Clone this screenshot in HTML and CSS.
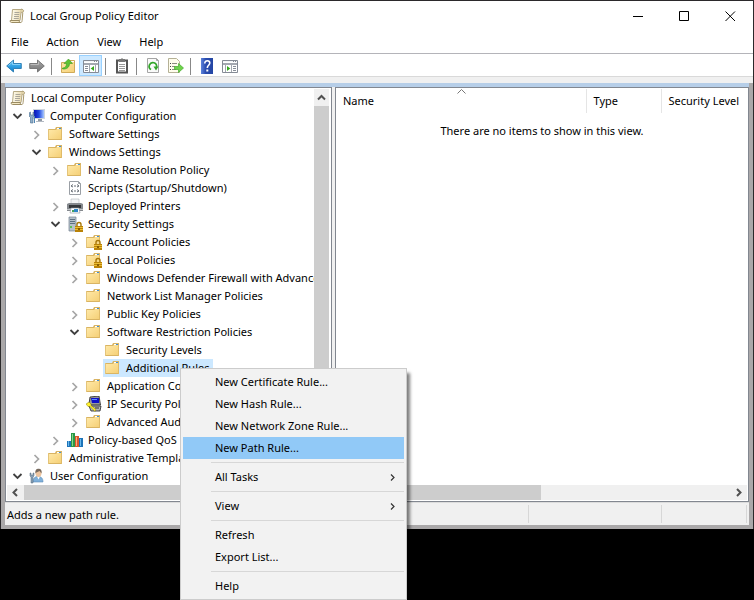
FILE: index.html
```html
<!DOCTYPE html>
<html lang="en">
<head>
<meta charset="utf-8">
<title>Local Group Policy Editor</title>
<link rel="stylesheet" href="styles.css">
</head>
<body>
<svg class="defs" aria-hidden="true">
  <defs>
    <linearGradient id="g-folder" x1="0" y1="0" x2="1" y2="1"><stop offset="0" stop-color="#ffe9a8"/><stop offset="1" stop-color="#f5d077"/></linearGradient>
    <linearGradient id="g-blue" x1="0" y1="0" x2="0" y2="1"><stop offset="0" stop-color="#5cc3f5"/><stop offset="1" stop-color="#0a7fd0"/></linearGradient>
    <linearGradient id="g-gray" x1="0" y1="0" x2="0" y2="1"><stop offset="0" stop-color="#aaa"/><stop offset="1" stop-color="#747474"/></linearGradient>
    <linearGradient id="g-paper" x1="0" y1="0" x2="1" y2="0"><stop offset="0" stop-color="#fffdf0"/><stop offset="1" stop-color="#ead9ac"/></linearGradient>
    <linearGradient id="g-screen" x1="0" y1="0" x2="1" y2="0"><stop offset="0" stop-color="#0712b8"/><stop offset=".5" stop-color="#2148e0"/><stop offset="1" stop-color="#a8c8ff"/></linearGradient>
    <linearGradient id="g-help" x1="0" y1="0" x2="1" y2="0"><stop offset="0" stop-color="#5d83dc"/><stop offset=".4" stop-color="#2a4cae"/><stop offset="1" stop-color="#2446a4"/></linearGradient>
    <symbol id="scroll" viewBox="0 0 16 16">
      <path d="M3.500 1.500h9L11 12.500H2.500z" fill="url(#g-paper)" stroke="#b5a882"/>
      <path d="M12 1.200c1.600 0 2.500.6 2.500 1.600S13.800 4.500 12.500 4.500" fill="#e8d9ae" stroke="#a8996f"/>
      <path d="M1.200 12.500h9c0 1.300.5 2 1.500 2H2.500c-1 0-1.500-.8-1.300-2z" fill="#f4e8c4" stroke="#9a8b62"/>
      <path d="M11.700 14.500c1 0 1.300-.7 1.400-2l.7-8" fill="none" stroke="#a8996f"/>
      <path d="M5.500 4.500h5M5.300 6.500h5M5 8.500h5M4.800 10.500h5" stroke="#aaa69a"/>
    </symbol>
    <symbol id="folder" viewBox="0 0 16 16">
      <path d="M0 3h7l1-2h6v13H0z" fill="#d9b463"/>
      <path d="M9 2h4v1H9z" fill="#fff"/><path d="M11 2h2v1h-2z" fill="#3f8fd8"/>
      <path d="M1 4h7l1-1h4v10H1z" fill="url(#g-folder)"/>
      <path d="M0 3h1v11H0z" fill="#e4c47a"/><path d="M13 3h1v11h-1z" fill="#e0bb69"/>
    </symbol>
    <symbol id="lock" viewBox="0 0 16 16">
      <path d="M10 10V8.500a2 2 0 0 1 4 0V10" fill="none" stroke="#a87708" stroke-width="1.400"/>
      <path d="M8 10h8v6H8z" fill="#b98208"/><path d="M8 11h8v1H8zM8 13h8v1H8z" fill="#ecbe35"/><path d="M11 12h2v2h-2z" fill="#8a5d00"/>
    </symbol>
    <symbol id="folder-lock" viewBox="0 0 16 16"><use href="#folder"/><use href="#lock"/></symbol>
    <symbol id="computer" viewBox="0 0 16 16">
      <path d="M4 1h12v10H4z" fill="#cfd5dc"/><path d="M5 2h10v8H5z" fill="url(#g-screen)"/>
      <path d="M9 11h4v2H9z" fill="#8f98a3"/><path d="M7 13h8v1H7z" fill="#b3bac3"/>
      <path d="M0 5v3l1.500 1.500V15h2.500V9.500L5 8V5l-1-1v3H1.500V4z" fill="#8fb0cc" stroke="#4b6c8b" stroke-width=".6"/>
      <path d="M5 8h1v7H5z" fill="#4f86b5"/>
    </symbol>
    <symbol id="script" viewBox="0 0 16 16">
      <path d="M2.500 1.500h9l2 2v11h-11z" fill="#fff" stroke="#9a9fa5"/><path d="M11.500 1.500v2h2" fill="none" stroke="#9a9fa5"/>
      <path d="M6 4.500l-2 1.500 2 1M10 4.500l2 1.500-2 1M7 6h2M6 9.500L4 11l2 1M10 9.500l2 1.500-2 1M7 11h2" fill="none" stroke="#555c64" stroke-width=".9"/>
    </symbol>
    <symbol id="printer" viewBox="0 0 16 16">
      <path d="M4 1h8v5H4z" fill="#f2f4f5" stroke="#b4b9bd" stroke-width=".6"/>
      <path d="M0 6l2-1h12l2 1v7H0z" fill="#85898e"/><path d="M2 7h12v3H2z" fill="#34373a"/><path d="M0 11h16v1H0z" fill="#c2c6c9"/>
      <path d="M4 10h8l1 5H3z" fill="#fff" stroke="#88909a" stroke-width=".6"/><path d="M5 12h3v2H5z" fill="#49a35d"/><path d="M7 11h4v3H7z" fill="#2d86c7"/>
    </symbol>
    <symbol id="server-lock" viewBox="0 0 16 16">
      <path d="M2 1h7v14H2z" fill="#b6c1cb" stroke="#74828f" stroke-width=".7"/><path d="M3 3.500h5M3 5.500h5M3 7.500h5" stroke="#5d7082"/><path d="M3 10h2v2H3z" fill="#5cc155"/>
      <use href="#lock"/>
    </symbol>
    <symbol id="ipsec" viewBox="0 0 16 16">
      <path d="M4 1l9-1 1.500 9H5L3 8z" fill="#9a9a9a" stroke="#222" stroke-width=".8"/><path d="M5 2h8v5H6z" fill="#1010c8"/><path d="M6 3h5v1H6z" fill="#5a8cff"/>
      <path d="M3 10h12l-1 5H5z" fill="#b8b8b8" stroke="#222" stroke-width=".8"/><path d="M9 12h4" stroke="#333"/>
      <path d="M0 8l3-2 2 2v1.500l5 4-1 2-5-5H2z" fill="#fff02a" stroke="#6b6200" stroke-width=".4"/>
    </symbol>
    <symbol id="bars" viewBox="0 0 16 16">
      <path d="M0 9h4v6H0z" fill="#1d74b9"/><path d="M1 9h1v5H1z" fill="#6ab9ed"/>
      <path d="M4 1h4v14H4z" fill="#2b9848"/><path d="M5 2h1v12H5z" fill="#85d68d"/>
      <path d="M8 4h4v11H8z" fill="#d9582c"/><path d="M9 5h1v9H9z" fill="#ffab83"/>
      <path d="M12 6h4v9h-4z" fill="#1d74b9"/><path d="M13 7h1v7h-1z" fill="#6ab9ed"/>
    </symbol>
    <symbol id="user" viewBox="0 0 16 16">
      <path d="M4 14c0-4 2-5.500 5-5.500s5 1.500 5 5.500z" fill="#7fb0da" stroke="#5a8bb5" stroke-width=".6"/><path d="M8 8.500l1.500 3 1.500-3z" fill="#fff"/>
      <path d="M6.500 5C6.500 2 7.500 1 9.500 1s3 1.200 3 4-1.200 4-3 4-3-1.500-3-4z" fill="#edc49e"/>
      <path d="M6.500 5.500C6 2 7.500.8 9.500.8s3.700 1.400 3 4.700c-1-1-1.200-2-2-2.500-1 1-3 1-4 2.500z" fill="#776a5e"/>
      <path d="M1 5v3l1 1v6h2V9l1-1V5H4v2H2V5z" fill="#8aa1b5" stroke="#50687c" stroke-width=".5"/>
    </symbol>
    <symbol id="back" viewBox="0 0 16 16"><path d="M.7 8l6.800-6v3.500h7.800v5H7.500V14z" fill="url(#g-blue)" stroke="#2879b0" stroke-width=".9"/><path d="M2.500 7.500l4-3.500v2.500h7.800" fill="none" stroke="#a4e0ff" stroke-width=".7"/></symbol>
    <symbol id="forward" viewBox="0 0 16 16"><path d="M15.300 8L8.500 2v3.500H.7v5h7.800V14z" fill="url(#g-gray)" stroke="#707070" stroke-width=".9"/><path d="M1.500 6.500h8V4" fill="none" stroke="#ccc" stroke-width=".7"/></symbol>
    <symbol id="up" viewBox="0 0 16 16"><path d="M1.500 4.500h7l1-2h5v12h-13z" fill="url(#g-folder)" stroke="#d0aa58"/><path d="M10 3.500h4" stroke="#fff"/><path d="M2.500 10c2.500 0 4-1.500 4-4.500H4L8.500 1l4 4.500h-3c0 4-3 6-7 5.500z" fill="#5ec232" stroke="#3c9a22" stroke-width=".6"/></symbol>
    <symbol id="tree-pane" viewBox="0 0 16 16"><path d="M.5 2.500h15v12H.5z" fill="#fff" stroke="#858b95"/><path d="M1 3h14v1H1z" fill="#f4f6f8"/><path d="M11 3h1v1h-1zM13 3h1v1h-1z" fill="#858b95"/><path d="M1 5.500h14M6.500 7v7M12.500 7v7M1 6.500h14" stroke="#a3a8b0"/><path d="M2 8.500h3M2 10.500h3M2 12.500h3" stroke="#888e98"/><path d="M11 8v5l-3.300-2.500z" fill="#35a81c"/></symbol>
    <symbol id="action-pane" viewBox="0 0 16 16"><path d="M.5 2.500h15v12H.5z" fill="#fff" stroke="#858b95"/><path d="M1 3h14v1H1z" fill="#f4f6f8"/><path d="M11 3h1v1h-1zM13 3h1v1h-1z" fill="#858b95"/><path d="M1 5.500h14M9.500 7v7M3.500 7v7M1 6.500h14" stroke="#a3a8b0"/><path d="M11 8.500h3M11 10.500h3M11 12.500h3" stroke="#888e98"/><path d="M5 8v5l3.300-2.500z" fill="#35a81c"/></symbol>
    <symbol id="clipboard" viewBox="0 0 16 16"><path d="M3 2.500h10v12H3z" fill="#fff" stroke="#555" stroke-width="2"/><path d="M5 1h2l1-1 1 1h2v3H5z" fill="#777"/><path d="M5 6.500h6M5 8.500h6M5 10.500h6M5 12.500h6" stroke="#9a9a9a"/></symbol>
    <symbol id="refresh" viewBox="0 0 16 16"><path d="M2.500.5h9l2 2v12h-11z" fill="#fafafa" stroke="#a5a5a5"/><path d="M11.500.5v2h2" fill="none" stroke="#a5a5a5"/><path d="M6 11.500A3.700 3.700 0 1 1 11.500 9" fill="none" stroke="#33a52a" stroke-width="1.700"/><path d="M8.500 8.500h5L11 12.500z" fill="#33a52a"/></symbol>
    <symbol id="export" viewBox="0 0 16 16"><path d="M.5.500h8l3 3v11H.5z" fill="#fffdec" stroke="#b5b196"/><path d="M2 5.500h1M2 8.500h1M2 11.500h1" stroke="#444"/><path d="M4 5.500h5M4 8.500h3M4 11.500h4" stroke="#8d8b80"/><path d="M6.500 8.500h4V5.500l5 4.500-5 4.500v-3h-4z" fill="#6ed34b" stroke="#44aa2a" stroke-width=".7"/></symbol>
    <symbol id="help" viewBox="0 0 16 16"><path d="M2 0h12v16H2z" fill="url(#g-help)"/><path d="M5.800 5.500C5.800 3.500 7 2.800 8.300 2.800s2.500.8 2.500 2.300C10.800 7.200 8.300 7.500 8.300 10" fill="none" stroke="#fff" stroke-width="1.600"/><path d="M7.300 11.500h2v2h-2z" fill="#fff"/></symbol>
    <symbol id="chev-right" viewBox="0 0 16 16"><path d="M5.500 5l4 4-4 4" fill="none" stroke="#a6a6a6" stroke-width="1.700"/></symbol>
    <symbol id="chev-down" viewBox="0 0 16 16"><path d="M3.500 6l4 4 4-4" fill="none" stroke="#404040" stroke-width="1.800"/></symbol>
  </defs>
</svg>

<main class="window">
  <header class="titlebar">
    <svg class="icon"><use href="#scroll"/></svg>
    <h1 class="title">Local Group Policy Editor</h1>
    <button class="caption" aria-label="Minimize"><svg viewBox="0 0 11 11"><path d="M0 5.500h10"/></svg></button>
    <button class="caption" aria-label="Maximize"><svg viewBox="0 0 11 11"><path d="M.5.5h9v9h-9z"/></svg></button>
    <button class="caption" aria-label="Close"><svg viewBox="0 0 11 11"><path d="M.5.5l9.500 9.500M10 .5L.5 10"/></svg></button>
  </header>
  <nav class="menubar">
    <button>File</button><button>Action</button><button>View</button><button>Help</button>
  </nav>
  <div class="toolbar">
    <button aria-label="Back"><svg class="icon"><use href="#back"/></svg></button>
    <button aria-label="Forward"><svg class="icon"><use href="#forward"/></svg></button>
    <span class="divider"></span>
    <button aria-label="Up one level"><svg class="icon"><use href="#up"/></svg></button>
    <button class="active" aria-label="Show or hide console tree"><svg class="icon"><use href="#tree-pane"/></svg></button>
    <span class="divider"></span>
    <button aria-label="Paste"><svg class="icon"><use href="#clipboard"/></svg></button>
    <span class="divider"></span>
    <button aria-label="Refresh"><svg class="icon"><use href="#refresh"/></svg></button>
    <button aria-label="Export list"><svg class="icon"><use href="#export"/></svg></button>
    <span class="divider"></span>
    <button aria-label="Help"><svg class="icon"><use href="#help"/></svg></button>
    <button aria-label="Show or hide action pane"><svg class="icon"><use href="#action-pane"/></svg></button>
  </div>

  <div class="frame">
    <div class="panes">
      <section class="pane tree-pane">
        <div class="tree-area">
          <div class="tree">
            <div class="row"><svg class="icon"><use href="#scroll"/></svg><span class="label">Local Computer Policy</span></div>
            <ul>
              <li>
                <div class="row"><svg class="expander"><use href="#chev-down"/></svg><svg class="icon"><use href="#computer"/></svg><span class="label">Computer Configuration</span></div>
                <ul>
                  <li><div class="row"><svg class="expander"><use href="#chev-right"/></svg><svg class="icon"><use href="#folder"/></svg><span class="label">Software Settings</span></div></li>
                  <li>
                    <div class="row"><svg class="expander"><use href="#chev-down"/></svg><svg class="icon"><use href="#folder"/></svg><span class="label">Windows Settings</span></div>
                    <ul>
                      <li><div class="row"><svg class="expander"><use href="#chev-right"/></svg><svg class="icon"><use href="#folder"/></svg><span class="label">Name Resolution Policy</span></div></li>
                      <li><div class="row leaf"><svg class="icon"><use href="#script"/></svg><span class="label">Scripts (Startup/Shutdown)</span></div></li>
                      <li><div class="row"><svg class="expander"><use href="#chev-right"/></svg><svg class="icon"><use href="#printer"/></svg><span class="label">Deployed Printers</span></div></li>
                      <li>
                        <div class="row"><svg class="expander"><use href="#chev-down"/></svg><svg class="icon"><use href="#server-lock"/></svg><span class="label">Security Settings</span></div>
                        <ul>
                          <li><div class="row"><svg class="expander"><use href="#chev-right"/></svg><svg class="icon"><use href="#folder-lock"/></svg><span class="label">Account Policies</span></div></li>
                          <li><div class="row"><svg class="expander"><use href="#chev-right"/></svg><svg class="icon"><use href="#folder-lock"/></svg><span class="label">Local Policies</span></div></li>
                          <li><div class="row"><svg class="expander"><use href="#chev-right"/></svg><svg class="icon"><use href="#folder"/></svg><span class="label">Windows Defender Firewall with Advanced Security</span></div></li>
                          <li><div class="row leaf"><svg class="icon"><use href="#folder"/></svg><span class="label">Network List Manager Policies</span></div></li>
                          <li><div class="row"><svg class="expander"><use href="#chev-right"/></svg><svg class="icon"><use href="#folder"/></svg><span class="label">Public Key Policies</span></div></li>
                          <li>
                            <div class="row"><svg class="expander"><use href="#chev-down"/></svg><svg class="icon"><use href="#folder"/></svg><span class="label">Software Restriction Policies</span></div>
                            <ul>
                              <li><div class="row leaf"><svg class="icon"><use href="#folder"/></svg><span class="label">Security Levels</span></div></li>
                              <li><div class="row leaf"><span class="selected"><svg class="icon"><use href="#folder"/></svg><span class="label">Additional Rules</span></span></div></li>
                            </ul>
                          </li>
                          <li><div class="row"><svg class="expander"><use href="#chev-right"/></svg><svg class="icon"><use href="#folder"/></svg><span class="label">Application Control Policies</span></div></li>
                          <li><div class="row"><svg class="expander"><use href="#chev-right"/></svg><svg class="icon"><use href="#ipsec"/></svg><span class="label">IP Security Policies</span></div></li>
                          <li><div class="row"><svg class="expander"><use href="#chev-right"/></svg><svg class="icon"><use href="#folder"/></svg><span class="label">Advanced Audit Policy</span></div></li>
                        </ul>
                      </li>
                      <li><div class="row"><svg class="expander"><use href="#chev-right"/></svg><svg class="icon"><use href="#bars"/></svg><span class="label">Policy-based QoS</span></div></li>
                    </ul>
                  </li>
                  <li><div class="row"><svg class="expander"><use href="#chev-right"/></svg><svg class="icon"><use href="#folder"/></svg><span class="label">Administrative Templates</span></div></li>
                </ul>
              </li>
              <li><div class="row"><svg class="expander"><use href="#chev-down"/></svg><svg class="icon"><use href="#user"/></svg><span class="label">User Configuration</span></div></li>
            </ul>
          </div>
          <div class="vscroll">
            <button aria-label="Scroll up"><svg viewBox="0 0 9 9"><path d="M1 6.500L4.500 3 8 6.500"/></svg></button>
            <div class="thumb"></div>
          </div>
        </div>
        <div class="hscroll">
          <button aria-label="Scroll tree left"><svg viewBox="0 0 9 9"><path d="M6 1L2.500 4.500 6 8"/></svg></button>
          <div class="thumb"></div>
          <button aria-label="Scroll tree right"><svg viewBox="0 0 9 9"><path d="M3 1l3.500 3.500L3 8"/></svg></button>
        </div>
      </section>

      <section class="pane list-pane">
        <table class="list">
          <thead>
            <tr>
              <th class="col-name">Name<svg class="sort" viewBox="0 0 9 5"><path d="M.5 4.500l4-4 4 4"/></svg></th>
              <th class="col-type">Type</th>
              <th class="col-level">Security Level</th>
            </tr>
          </thead>
          <tbody><tr><td colspan="3">There are no items to show in this view.</td></tr></tbody>
        </table>
        <div class="hscroll">
          <button aria-label="Scroll list left"><svg viewBox="0 0 9 9"><path d="M6 1L2.500 4.500 6 8"/></svg></button>
          <div class="thumb half"></div>
          <button aria-label="Scroll list right"><svg viewBox="0 0 9 9"><path d="M3 1l3.500 3.500L3 8"/></svg></button>
        </div>
      </section>
    </div>
    <footer class="statusbar">
      <span class="message">Adds a new path rule.</span>
      <span class="cell wide"></span>
      <span class="cell"></span>
    </footer>
  </div>
</main>

<div class="context-menu" role="menu">
  <button role="menuitem">New Certificate Rule...</button>
  <button role="menuitem">New Hash Rule...</button>
  <button role="menuitem">New Network Zone Rule...</button>
  <button role="menuitem" class="hot">New Path Rule...</button>
  <hr>
  <button role="menuitem">All Tasks<svg viewBox="0 0 9 9"><path d="M3 1.500l3 3-3 3"/></svg></button>
  <hr>
  <button role="menuitem">View<svg viewBox="0 0 9 9"><path d="M3 1.500l3 3-3 3"/></svg></button>
  <hr>
  <button role="menuitem">Refresh</button>
  <button role="menuitem">Export List...</button>
  <hr>
  <button role="menuitem">Help</button>
</div>
</body>
</html>
```
FILE: styles.css
```css
* {
  box-sizing: border-box;
}

body {
  margin: 0;
  min-height: 100vh;
  background: #000;
  color: #000;
  font: 11px/18px "Noto Sans", "Open Sans", sans-serif;
}

button {
  margin: 0;
  padding: 0;
  border: 0;
  background: none;
  color: inherit;
  font: inherit;
}

svg {
  display: block;
  flex: none;
}

.defs {
  position: absolute;
  width: 0;
  height: 0;
}

.icon {
  width: 16px;
  height: 16px;
}

.window {
  border: 1px solid #2b292b;
  border-bottom: 0;
  background: #fff;
}

/* Title bar */
.titlebar {
  display: flex;
  align-items: center;
  height: 30px;
  padding-left: 8px;
}

.title {
  flex: 1;
  margin: 0 0 0 5px;
  font-size: 11px;
  font-weight: 400;
}

.caption {
  display: flex;
  align-items: center;
  justify-content: center;
  width: 46px;
  height: 30px;
}

.caption svg {
  width: 11px;
  height: 11px;
  fill: none;
  stroke: #000;
}

/* Menu bar */
.menubar {
  display: flex;
  height: 22px;
  padding-left: 1px;
}

.menubar button {
  padding: 0 9px;
}

/* Toolbar */
.toolbar {
  display: flex;
  height: 24px;
  padding: 1px 0 0 1px;
  border-top: 1px solid #b4b4b9;
  border-bottom: 1px solid #d9d9d9;
}

.toolbar button {
  display: flex;
  align-items: center;
  justify-content: center;
  width: 23px;
  height: 21px;
}

.toolbar .active {
  border: 1px solid #99d1ff;
  background: #cce8ff;
}

.toolbar .divider {
  width: 8px;
  padding: 3px;
}

.toolbar .divider::before {
  content: "";
  display: block;
  width: 1px;
  height: 17px;
  background: #888;
}

/* Console frame */
.frame {
  border: solid #aaa8a9;
  border-width: 0 4px 4px;
  background: #f0f0f0;
}

.frame::before {
  content: "";
  display: block;
  height: 6px;
  margin: 0 -4px;
  background: #f0f0f0;
}

.panes {
  display: flex;
  gap: 3px;
  border-top: 4px solid #b6cee8;
}

.pane {
  display: flex;
  flex-direction: column;
  padding: 1px;
  border: 1px solid #828790;
  background: #fff;
}

.tree-pane {
  flex: none;
  width: 327px;
}

.list-pane {
  flex: 1;
  min-width: 0;
}

.tree-area {
  display: flex;
}

/* Tree */
.tree {
  flex: 1;
  min-width: 0;
  overflow: hidden;
  padding-left: 3px;
}

.tree ul {
  margin: 0;
  padding: 0;
  list-style: none;
}

.tree li ul {
  padding-left: 19px;
}

.row {
  display: flex;
  align-items: center;
  height: 18px;
  white-space: nowrap;
}

.row.leaf {
  padding-left: 19px;
}

.expander {
  width: 16px;
  height: 16px;
  margin-right: 3px;
}

.label {
  padding-left: 5px;
}

.selected {
  display: flex;
  align-items: center;
  height: 18px;
  margin-left: -2px;
  padding: 0 4px 0 2px;
  background: #cce8ff;
}

/* Scroll bars */
.vscroll {
  display: flex;
  flex-direction: column;
  width: 15px;
  margin-right: 1px;
  background: #f0f0f0;
}

.hscroll {
  display: flex;
  height: 15px;
  margin-top: auto;
  background: #f0f0f0;
}

.vscroll button,
.hscroll button {
  display: flex;
  align-items: center;
  justify-content: center;
  width: 17px;
  height: 15px;
}

.vscroll button {
  width: 15px;
  height: 17px;
}

.vscroll svg,
.hscroll svg {
  width: 9px;
  height: 9px;
  fill: none;
  stroke: #505050;
  stroke-width: 2;
}

.thumb {
  flex: 1;
  background: #cdcdcd;
}

.thumb.half {
  flex: none;
  width: 50%;
  max-width: 187px;
  margin-right: auto;
}

/* List */
.list {
  width: 100%;
  border-collapse: collapse;
  table-layout: fixed;
}

.list th {
  height: 24px;
  padding: 0 0 0 7px;
  border-left: 1px solid #e5e5e5;
  font-weight: 400;
  text-align: left;
  white-space: nowrap;
}

.list .col-name {
  position: relative;
  padding-left: 6px;
  border-left: 0;
}

.list .col-type {
  width: 75px;
}

.list .col-level {
  width: 86px;
}

.list td {
  height: 36px;
  padding: 0;
  text-align: center;
}

.sort {
  position: absolute;
  top: 0;
  left: calc(50% - 4px);
  width: 9px;
  height: 5px;
  fill: none;
  stroke: #777;
}

/* Status bar */
.statusbar {
  display: flex;
  height: 23px;
  padding: 2px 2px 2px 0;
  border-top: 1px solid #dcdcdc;
}

.message {
  flex: 1;
  padding-left: 2px;
  line-height: 19px;
}

.cell {
  width: 86px;
  border: solid #d7d7d7;
  border-width: 0 1px;
}

.cell.wide {
  width: 133px;
  border-right: 0;
}

/* Context menu */
.context-menu {
  position: absolute;
  top: 368px;
  left: 180px;
  width: 227px;
  padding: 2px;
  border: 1px solid #ccc;
  background: #f2f2f2;
  box-shadow: 4px 4px 3px -1px rgba(0, 0, 0, 0.5);
}

.context-menu button {
  display: flex;
  align-items: center;
  justify-content: space-between;
  width: 100%;
  height: 22px;
  padding: 0 7px 0 32px;
}

.context-menu .hot {
  background: #91c9f7;
}

.context-menu svg {
  width: 9px;
  height: 9px;
  fill: none;
  stroke: #333;
  stroke-width: 1.2;
}

.context-menu hr {
  height: 1px;
  margin: 3px 0 3px 28px;
  border: 0;
  background: #d7d7d7;
}
```
